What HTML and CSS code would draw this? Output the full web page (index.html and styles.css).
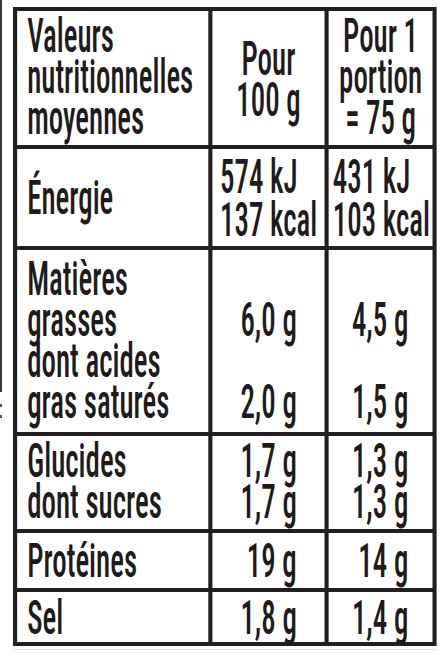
FILE: index.html
```html
<!DOCTYPE html>
<html lang="fr">
<head>
<meta charset="utf-8">
<title>Valeurs nutritionnelles</title>
<link rel="stylesheet" href="styles.css">
</head>
<body>
<div class="edge">
  <div class="edge-line"></div>
  <div class="edge-mark"></div>
</div>
<div class="frame">
  <div class="table">
    <div class="cell label pad-head">Valeurs<br>nutritionnelles<br>moyennes</div>
    <div class="cell head pad-head-mid">Pour<br>100 g</div>
    <div class="cell head pad-head">Pour 1<br>portion<br>= 75 g</div>

    <div class="cell label pad-energy">Énergie</div>
    <div class="cell energy energy-mid pad-energy-val">574 kJ<br>137 kcal</div>
    <div class="cell energy energy-end pad-energy-val">431 kJ<br>103 kcal</div>

    <div class="cell label pad-fat">Matières<br>grasses<br>dont acides<br>gras saturés</div>
    <div class="cell val val-mid pad-fat-val stack"><span>6,0 g</span><span>2,0 g</span></div>
    <div class="cell val val-end pad-fat-val stack"><span>4,5 g</span><span>1,5 g</span></div>

    <div class="cell label pad-gluc">Glucides<br>dont sucres</div>
    <div class="cell val val-mid pad-gluc">1,7 g<br>1,7 g</div>
    <div class="cell val val-end pad-gluc">1,3 g<br>1,3 g</div>

    <div class="cell label pad-prot">Protéines</div>
    <div class="cell val val-mid pad-prot">19 g</div>
    <div class="cell val val-end pad-prot">14 g</div>

    <div class="cell label pad-sel">Sel</div>
    <div class="cell val val-mid pad-sel">1,8 g</div>
    <div class="cell val val-end pad-sel">1,4 g</div>
  </div>
  <div class="under"></div>
</div>
</body>
</html>
```
FILE: styles.css
```css
html, body {
  margin: 0;
  padding: 0;
  overflow: hidden;
  background: #ffffff;
}

body {
  display: flex;
  align-items: flex-start;
  width: 441px;
  height: 654px;
  font-family: "Roboto", "Liberation Sans", sans-serif;
  font-stretch: condensed;
  font-weight: 500;
  color: #1e1b1a;
}

.edge {
  flex: none;
  display: flex;
  flex-direction: column;
  width: 2px;
}

.edge-line {
  height: 392px;
  background: #3a3a3a;
}

.edge-mark {
  margin-top: 12px;
  height: 14px;
  border-top: 3px solid #555;
  border-bottom: 3px solid #555;
  box-sizing: border-box;
}

.frame {
  flex: none;
  width: 424px;
  margin: 7px 0 0 11px;
}

.table {
  width: 718px;
  display: grid;
  grid-template-columns: 324px 190px 176px;
  grid-template-rows: 134px 97px 182px 93px 55px 50px;
  column-gap: 7px;
  row-gap: 4px;
  padding: 4px 7px;
  box-sizing: border-box;
  background: #231f20;
  transform: scaleX(0.59);
  transform-origin: 0 0;
  font-size: 49px;
  line-height: 41px;
}

.cell {
  background: #ffffff;
  white-space: nowrap;
  box-sizing: border-box;
}

.label { padding-left: 17px; }

.head { text-align: center; }

.energy { line-height: 43px; }
.energy-mid { padding-left: 13px; }
.energy-end { padding-left: 7px; }

.val { text-align: right; }
.val-mid { padding-right: 47px; }
.val-end { padding-right: 41px; }

.stack {
  display: flex;
  flex-direction: column;
  align-items: flex-end;
  gap: 41px;
}

.pad-head { padding-top: 4px; }
.pad-head-mid { padding-top: 27px; }
.pad-energy { padding-top: 28px; }
.pad-energy-val { padding-top: 6px; }
.pad-fat { padding-top: 8px; }
.pad-fat-val { padding-top: 49px; }
.pad-gluc { padding-top: 4px; }
.pad-prot { padding-top: 7px; }
.pad-sel { padding-top: 5px; }

.under {
  margin-top: 3px;
  height: 1px;
  background: #e2e2e2;
}
```
